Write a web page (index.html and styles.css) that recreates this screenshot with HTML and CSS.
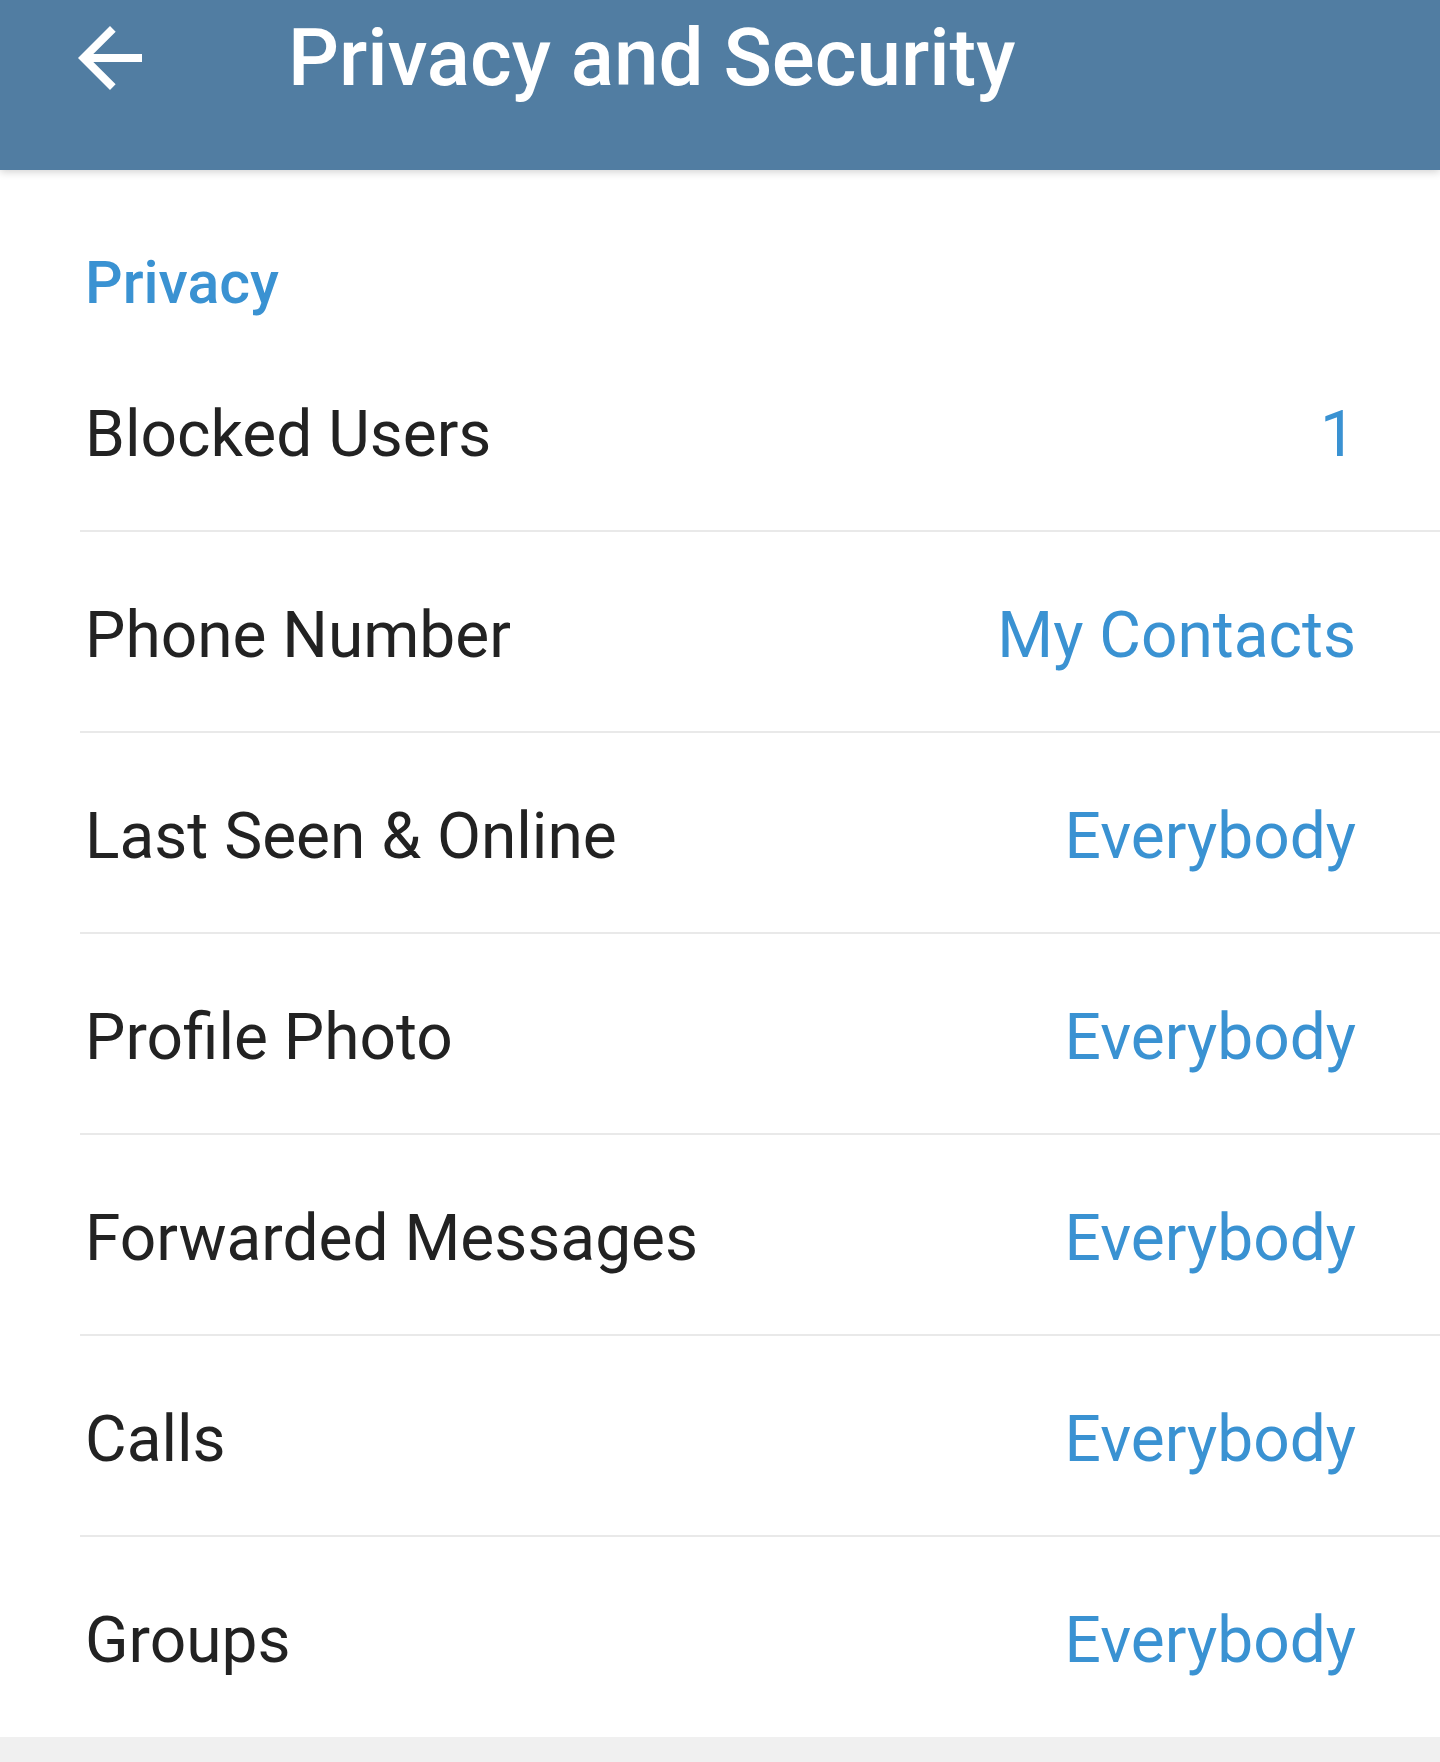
FILE: index.html
```html
<!DOCTYPE html>
<html lang="en">
<head>
    <meta charset="UTF-8">
    <meta name="viewport" content="width=device-width, initial-scale=1.0">
    <title>Privacy and Security</title>
    <link rel="stylesheet" href="styles.css">
</head>
<body>

    <header class="app-bar">
        <svg class="back-icon" viewBox="0 0 24 24" width="96" height="96">
            <path d="M20 11H7.83l5.59-5.59L12 4l-8 8 8 8 1.41-1.41L7.83 13H20v-2z" fill="#fff"/>
        </svg>
        <h1 class="app-title">Privacy and Security</h1>
    </header>

    <section class="settings">
        <h2 class="section-title">Privacy</h2>
        <div class="row">
            <span class="row-label">Blocked Users</span>
            <span class="row-value">1</span>
        </div>
        <div class="row">
            <span class="row-label">Phone Number</span>
            <span class="row-value">My Contacts</span>
        </div>
        <div class="row">
            <span class="row-label">Last Seen &amp; Online</span>
            <span class="row-value">Everybody</span>
        </div>
        <div class="row">
            <span class="row-label">Profile Photo</span>
            <span class="row-value">Everybody</span>
        </div>
        <div class="row">
            <span class="row-label">Forwarded Messages</span>
            <span class="row-value">Everybody</span>
        </div>
        <div class="row">
            <span class="row-label">Calls</span>
            <span class="row-value">Everybody</span>
        </div>
        <div class="row">
            <span class="row-label">Groups</span>
            <span class="row-value">Everybody</span>
        </div>
    </section>

</body>
</html>
```

FILE: styles.css
```css
/* Page base */
body {
    margin: 0;
    font-family: Roboto, "Noto Sans", Arial, sans-serif;
    background-color: #f0f0f0;
    color: #222;
}

/* Top bar */
.app-bar {
    position: relative;
    z-index: 2;
    height: 170px;
    box-sizing: border-box;
    padding: 10px 0 0 62px;
    display: flex;
    align-items: flex-start;
    background-color: #517da2;
    box-shadow: 0 2px 8px rgba(0, 0, 0, 0.18);
}
.back-icon {
    display: block;
    flex-shrink: 0;
}
.app-title {
    margin: 8px 0 0 130px;
    font-size: 80px;
    line-height: 80px;
    font-weight: 500;
    color: #fff;
}

/* Settings list */
.settings {
    background: #fff;
    padding-bottom: 1px;
    box-shadow: 0 2px 4px rgba(0, 0, 0, 0.08);
}
.section-title {
    margin: 0;
    padding: 84px 80px 19px 85px;
    font-size: 59px;
    line-height: 58px;
    font-weight: 500;
    color: #3a92d2;
}
.row {
    box-sizing: border-box;
    height: 201px;
    margin-left: 80px;
    padding: 8px 84px 0 5px;
    display: flex;
    align-items: center;
    justify-content: space-between;
    border-bottom: 2px solid #e9e9e9;
    font-size: 64px;
}
.row:last-child {
    height: 199px;
    border-bottom: none;
}
.row-label {
    color: #222;
}
.row-value {
    color: #3a92d2;
}
```
